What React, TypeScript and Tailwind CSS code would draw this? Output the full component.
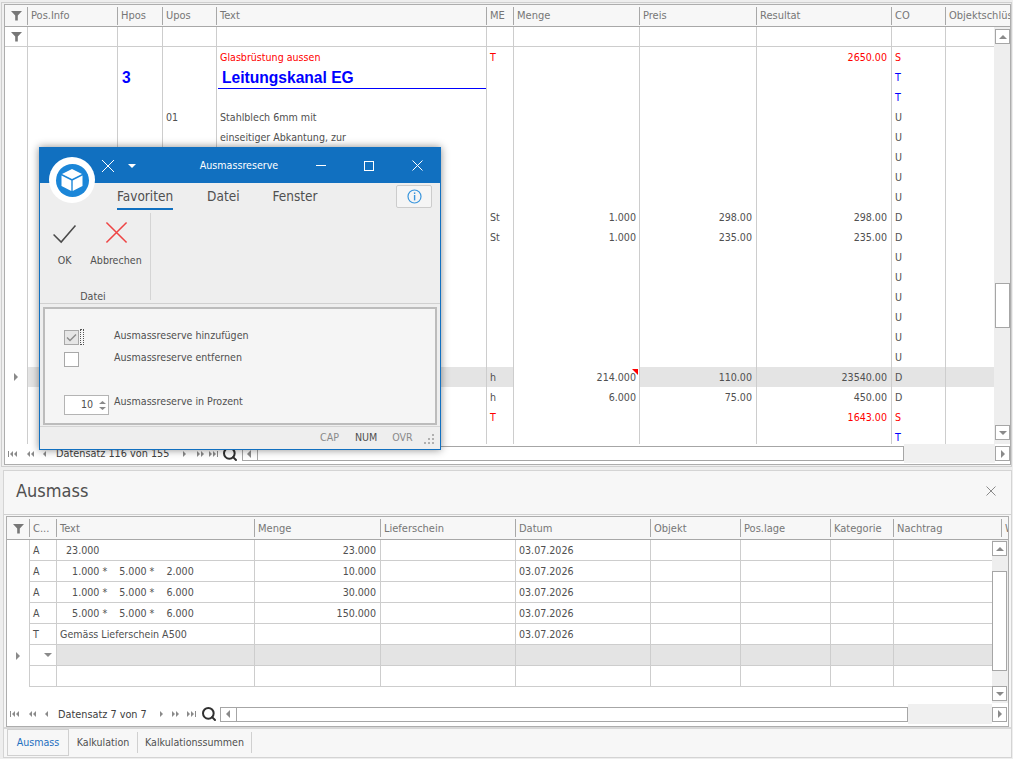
import { Search } from 'lucide-react'

const topHeadWidths = [22, 90, 45, 54, 270, 27, 126, 117, 135, 54, 65]
const topCols = [23, 90, 45, 54, 270, 27, 126, 117, 135, 54, 48]
const topHeads = ['', 'Pos.Info', 'Hpos', 'Upos', 'Text', 'ME', 'Menge', 'Preis', 'Resultat', 'CO', 'Objektschlüs']

const lowHeadWidths = [22, 27, 198, 126, 135, 135, 90, 90, 63, 108]
const lowHeads = ['', 'C...', 'Text', 'Menge', 'Lieferschein', 'Datum', 'Objekt', 'Pos.lage', 'Kategorie', 'Nachtrag']

type TopRow = { upos?: string; text?: string; me?: string; menge?: string; preis?: string; res?: string; co?: string; tone?: 'red' | 'blue' }

const topRows: TopRow[] = [
  { text: 'Glasbrüstung aussen', me: 'T', res: '2650.00', co: 'S', tone: 'red' },
  { co: 'T', tone: 'blue' },
  { co: 'T', tone: 'blue' },
  { upos: '01', text: 'Stahlblech 6mm mit', co: 'U' },
  { text: 'einseitiger Abkantung, zur', co: 'U' },
  { co: 'U' },
  { co: 'U' },
  { co: 'U' },
  { me: 'St', menge: '1.000', preis: '298.00', res: '298.00', co: 'D' },
  { me: 'St', menge: '1.000', preis: '235.00', res: '235.00', co: 'D' },
  { co: 'U' },
  { co: 'U' },
  { co: 'U' },
  { co: 'U' },
  { co: 'U' },
  { co: 'U' },
  { me: 'h', menge: '214.000', preis: '110.00', res: '23540.00', co: 'D' },
  { me: 'h', menge: '6.000', preis: '75.00', res: '450.00', co: 'D' },
  { me: 'T', res: '1643.00', co: 'S', tone: 'red' },
  { co: 'T', tone: 'blue' },
]

const lowRows = [
  { c: 'A', text: '  23.000', menge: '23.000', datum: '03.07.2026' },
  { c: 'A', text: '    1.000 *    5.000 *    2.000', menge: '10.000', datum: '03.07.2026' },
  { c: 'A', text: '    1.000 *    5.000 *    6.000', menge: '30.000', datum: '03.07.2026' },
  { c: 'A', text: '    5.000 *    5.000 *    6.000', menge: '150.000', datum: '03.07.2026' },
  { c: 'T', text: 'Gemäss Lieferschein A500', menge: '', datum: '03.07.2026' },
]

function Funnel() {
  return (
    <svg width="11" height="11" viewBox="0 0 11 11">
      <path d="M0 1h11L6.8 5.6V10.5H4.2V5.6z" fill="#777" />
    </svg>
  )
}

function Tri({ dir, color = '#8a8a8a' }: { dir: 'l' | 'r' | 'u' | 'd'; color?: string }) {
  const d = { l: 'M6 1v8L2 5z', r: 'M3 1v8l4-4z', u: 'M1 7h8L5 3z', d: 'M1 3h8L5 7z' }[dir]
  return (
    <svg width="10" height="10" viewBox="0 0 10 10" className="shrink-0">
      <path d={d} fill={color} />
    </svg>
  )
}

function NavGlyph({ dir, double, bar }: { dir: 'l' | 'r'; double?: boolean; bar?: boolean }) {
  const left = dir === 'l'
  return (
    <svg width="10" height="8" viewBox="0 0 10 8" className="shrink-0">
      {left ? (
        <g fill="#8a8a8a">
          {bar && <rect x="0" y="1" width="1" height="6" />}
          <path d="M5 1v6L2 4z" />
          {(double || bar) && <path d="M9 1v6L6 4z" />}
        </g>
      ) : (
        <g fill="#8a8a8a">
          <path d={double || bar ? 'M1 1v6l3-3z' : 'M4 1v6l3-3z'} />
          {(double || bar) && <path d="M5 1v6l3-3z" />}
          {bar && <rect x="9" y="1" width="1" height="6" />}
        </g>
      )}
    </svg>
  )
}

function ScrollBtn({ dir }: { dir: 'l' | 'r' | 'u' | 'd' }) {
  return (
    <div className="flex h-[15px] w-[15px] shrink-0 items-center justify-center border border-[#a6a6a6] bg-white">
      <Tri dir={dir} />
    </div>
  )
}

function HeadCell({ w, label, first }: { w: number; label: string; first?: boolean }) {
  return (
    <div style={{ width: w }} className="flex h-full shrink-0 items-center overflow-hidden">
      {first ? (
        <div className="flex w-full justify-center">
          <Funnel />
        </div>
      ) : (
        <>
          <span className="mr-[3px] h-[18px] w-px shrink-0 bg-[#a8a8a8]" />
          <span className="translate-y-[1px] text-[11px] whitespace-nowrap text-[#767676]">{label}</span>
        </>
      )}
    </div>
  )
}

function TopGridRow({ row, index }: { row: TopRow; index: number }) {
  const selected = index === 16
  const bg = selected ? 'bg-[#e4e4e4]' : 'bg-white'
  const tone = row.tone === 'red' ? 'text-[#ff0000]' : row.tone === 'blue' ? 'text-[#0000ff]' : 'text-[#505050]'
  const cell = `h-full shrink-0 border-r border-[#cdcdcd] px-[3px] leading-[20px] whitespace-pre ${bg}`
  return (
    <div className="flex h-[20px]">
      <div className="flex w-[23px] shrink-0 items-center justify-center border-r border-[#cdcdcd] bg-white">
        {selected && <Tri dir="r" />}
      </div>
      <div className={`w-[90px] ${cell}`} />
      <div className={`w-[45px] ${cell}`}>
        {index === 1 ? <span className='inline-block translate-y-[1px] pl-[1px] font-["Liberation_Sans",sans-serif] text-[15.6px] font-bold text-[#0000ff]'>3</span> : ''}
      </div>
      <div className={`w-[54px] ${cell} text-[#505050]`}>{row.upos}</div>
      <div className={`relative w-[270px] ${cell} ${tone}`}>
        {index === 1 ? (
          <>
            <span className='inline-block translate-y-[1px] pl-[2px] font-["Liberation_Sans",sans-serif] text-[15.6px] font-bold text-[#0000ff]'>Leitungskanal EG</span>
            <span className="absolute top-[21px] left-[1px] z-10 h-px w-[268px] bg-[#0000ff]" />
          </>
        ) : (
          row.text
        )}
      </div>
      <div className={`w-[27px] ${cell} ${tone}`}>{row.me}</div>
      <div className={`relative w-[126px] ${cell} !bg-white text-right ${tone}`}>
        {row.menge}
        {selected && <span className="absolute top-[2px] right-[1px] h-0 w-0 border-t-[6px] border-l-[6px] border-t-[#ff0000] border-l-transparent" />}
      </div>
      <div className={`w-[117px] ${cell} pr-[4px] text-right ${tone}`}>{row.preis}</div>
      <div className={`w-[135px] ${cell} pr-[4px] text-right ${tone}`}>{row.res}</div>
      <div className={`w-[54px] ${cell} ${tone}`}>{row.co}</div>
      <div className={`w-[48px] shrink-0 ${bg}`} />
    </div>
  )
}

function TopGrid() {
  return (
    <div className="flex h-[461px] flex-col border border-[#adadad] bg-white">
      <div className="flex h-[22px] shrink-0 items-center border-b border-[#a8a8a8] bg-[#f7f7f7]">
        {topHeads.map((h, i) => (
          <HeadCell key={h + i} w={topHeadWidths[i]} label={h} first={i === 0} />
        ))}
      </div>
      <div className="flex h-[417px] shrink-0">
        <div className="flex min-w-0 flex-1 flex-col overflow-hidden">
          <div className="flex h-[20px] shrink-0 border-b border-[#cdcdcd]">
            {topCols.map((w, i) => (
              <div key={i} style={{ width: w }} className={`flex shrink-0 items-center justify-center ${i < 10 ? 'border-r border-[#cdcdcd]' : ''}`}>
                {i === 0 && <Funnel />}
              </div>
            ))}
          </div>
          <div className="h-[397px] overflow-hidden">
            {topRows.map((r, i) => (
              <TopGridRow key={i} row={r} index={i} />
            ))}
          </div>
        </div>
        <div className="flex h-[417px] w-[16px] shrink-0 flex-col items-end bg-[#eeeeee] pt-[2px]">
          <ScrollBtn dir="u" />
          <div className="mt-[239px] h-[45px] w-[15px] border border-[#a6a6a6] bg-white" />
          <div className="mt-[97px]">
            <ScrollBtn dir="d" />
          </div>
        </div>
      </div>
      <div className="flex h-[20px] shrink-0 items-center bg-white pb-[1px] pl-[3px] text-[#404040]">
        <NavGlyph dir="l" bar />
        <div className="w-[7px] shrink-0" />
        <NavGlyph dir="l" double />
        <div className="w-[6px] shrink-0" />
        <NavGlyph dir="l" />
        <span className="mr-[10px] ml-[5px] w-[113px] shrink-0 translate-y-[1px] text-[10.8px] whitespace-nowrap">Datensatz 116 von 155</span>
        <NavGlyph dir="r" />
        <div className="w-[7px] shrink-0" />
        <NavGlyph dir="r" double />
        <div className="w-[2px] shrink-0" />
        <NavGlyph dir="r" bar />
        <Search size={16} strokeWidth={3} className="mr-[4px] ml-[4px] shrink-0 text-[#303030]" />
        <div className="flex h-[15px] w-[662px] shrink-0 border border-[#a6a6a6] bg-white">
          <div className="flex w-[15px] items-center justify-center border-r border-[#a6a6a6]">
            <Tri dir="l" />
          </div>
        </div>
        <div className="h-full flex-1 bg-[#f0f0f0]" />
        <ScrollBtn dir="r" />
      </div>
    </div>
  )
}

function LowGrid() {
  const line = 'border-r border-b border-[#cdcdcd]'
  return (
    <div className="flex h-[211px] flex-col border border-[#adadad] bg-white">
      <div className="flex h-[23px] shrink-0 items-center overflow-hidden border-b border-[#a8a8a8] bg-[#f7f7f7]">
        {lowHeads.map((h, i) => (
          <HeadCell key={h + i} w={lowHeadWidths[i]} label={h} first={i === 0} />
        ))}
        <HeadCell w={9} label="W" />
      </div>
      <div className="flex">
        <div className="w-[985px] shrink-0">
          {[...lowRows, null, undefined].map((r, i) => {
            const selected = r === null
            const bg = selected ? 'bg-[#e4e4e4]' : 'bg-white'
            const cell = `h-[21px] shrink-0 px-[3px] leading-[20px] whitespace-pre text-[#505050] ${line}`
            return (
              <div key={i} className="flex">
                <div className="flex h-[21px] w-[23px] shrink-0 items-center justify-center border-r border-[#cdcdcd]">
                  {selected && <Tri dir="r" />}
                </div>
                <div className={`flex w-[27px] items-center ${selected ? 'justify-end' : ''} ${cell}`}>{selected ? <Tri dir="d" /> : r?.c}</div>
                <div className={`w-[198px] ${cell} ${bg}`}>{r?.text}</div>
                <div className={`w-[126px] pr-[4px] text-right ${cell} ${bg}`}>{r?.menge}</div>
                <div className={`w-[135px] ${cell} ${bg}`} />
                <div className={`w-[135px] ${cell} ${bg}`}>{r?.datum}</div>
                <div className={`w-[90px] ${cell} ${bg}`} />
                <div className={`w-[90px] ${cell} ${bg}`} />
                <div className={`w-[63px] ${cell} ${bg}`} />
                <div className={`h-[21px] flex-1 border-b border-[#cdcdcd] ${bg}`} />
              </div>
            )
          })}
        </div>
        <div className="flex h-[163px] w-[16px] shrink-0 flex-col bg-[#eeeeee] pt-[1px]">
          <ScrollBtn dir="u" />
          <div className="mt-[15px] h-[100px] w-[15px] border border-[#a6a6a6] bg-white" />
          <div className="mt-[15px]">
            <ScrollBtn dir="d" />
          </div>
        </div>
      </div>
      <div className="mt-auto flex h-[22px] shrink-0 items-center pb-[2px] pl-[3px] text-[#404040]">
        <NavGlyph dir="l" bar />
        <div className="w-[7px] shrink-0" />
        <NavGlyph dir="l" double />
        <div className="w-[6px] shrink-0" />
        <NavGlyph dir="l" />
        <span className="mr-[9px] ml-[5px] w-[89px] shrink-0 translate-y-[1px] text-[10.8px] whitespace-nowrap">Datensatz 7 von 7</span>
        <NavGlyph dir="r" />
        <div className="w-[5px] shrink-0" />
        <NavGlyph dir="r" double />
        <div className="w-[5px] shrink-0" />
        <NavGlyph dir="r" bar />
        <Search size={16} strokeWidth={3} className="mr-[3px] ml-[5px] shrink-0 text-[#303030]" />
        <div className="flex h-[15px] w-[688px] shrink-0 border border-[#a6a6a6] bg-white">
          <div className="flex w-[16px] items-center justify-center border-r border-[#a6a6a6]">
            <Tri dir="l" />
          </div>
        </div>
        <div className="h-full flex-1 bg-[#f0f0f0]" />
        <ScrollBtn dir="r" />
        <div className="w-px shrink-0" />
      </div>
    </div>
  )
}

function Dialog() {
  return (
    <div className="absolute top-[147px] left-[39px] flex h-[303px] w-[402px] flex-col border border-[#1170c0] bg-[#eeeeee] shadow-[0_0_8px_rgba(0,0,0,0.45)]">
      {/* title bar */}
      <div className="flex h-[35px] shrink-0 items-center bg-[#1170c0] text-white">
        <svg width="14" height="14" viewBox="0 0 14 14" className="ml-[61px]">
          <path d="M1 1l12 12M13 1L1 13" stroke="#fff" strokeWidth="1" />
        </svg>
        <svg width="8" height="4" viewBox="0 0 8 4" className="ml-[13px]">
          <path d="M0 0h8L4 4z" fill="#fff" />
        </svg>
        <span className="ml-[63px] w-[80px] text-center whitespace-nowrap">Ausmassreserve</span>
        <span className="ml-[37px] h-px w-[10px] bg-white" />
        <span className="ml-[38px] h-[10px] w-[10px] border border-white" />
        <svg width="11" height="11" viewBox="0 0 11 11" className="ml-[38px]">
          <path d="M0.5 0.5l10 10M10.5 0.5l-10 10" stroke="#fff" strokeWidth="1" />
        </svg>
      </div>
      {/* logo */}
      <div className="absolute top-[9px] left-[9px] flex h-[46px] w-[46px] items-center justify-center rounded-full bg-white">
        <div className="flex h-[33px] w-[33px] items-center justify-center rounded-full bg-[#1b86d8]">
          <svg width="24" height="24" viewBox="0 0 24 24">
            <path d="M12 1l10 5-10 5L2 6z" fill="#fff" />
            <path d="M1.5 7.5l9.8 5V23l-9.8-5z" fill="#fff" />
            <path d="M22.5 7.5l-9.8 5V23l9.8-5z" fill="#fff" />
          </svg>
        </div>
      </div>
      {/* ribbon tabs */}
      <div className="flex h-[27px] shrink-0 items-center pl-[77px] text-[13.5px] text-[#505050]">
        <span className="relative">
          Favoriten
          <span className="absolute right-0 -bottom-[3px] left-0 h-[2px] bg-[#1170c0]" />
        </span>
        <span className="ml-[34px]">Datei</span>
        <span className="ml-[33px]">Fenster</span>
        <div className="mr-[8px] ml-auto flex h-[23px] w-[36px] items-center justify-center rounded-[2px] border border-[#cccccc] bg-[#f5f5f5]">
          <svg width="15" height="15" viewBox="0 0 15 15" fill="none">
            <circle cx="7.5" cy="7.5" r="6.5" stroke="#3a96dd" strokeWidth="1.2" />
            <rect x="6.9" y="3.4" width="1.4" height="1.6" fill="#3a96dd" />
            <rect x="6.9" y="6" width="1.4" height="5.4" fill="#3a96dd" />
          </svg>
        </div>
      </div>
      {/* ribbon body */}
      <div className="flex h-[94px] shrink-0 border-b border-[#d0d0d0] pt-[3px] text-[#505050]">
        <div className="mb-[3px] flex w-[111px] flex-col items-center border-r border-[#d4d4d4]">
          <div className="flex h-[62px] w-full">
            <div className="flex w-[49px] flex-col items-center">
              <svg width="25" height="20" viewBox="0 0 26 21" className="mt-[11px]" fill="none">
                <path d="M1.5 11l8 8L24.5 1.5" stroke="#4a4a4a" strokeWidth="1.6" />
              </svg>
              <span className="mt-[9px]">OK</span>
            </div>
            <div className="flex w-[54px] flex-col items-center">
              <svg width="23" height="23" viewBox="0 0 24 24" className="mt-[8px]" fill="none">
                <path d="M1.5 1.5l21 21M22.5 1.5l-21 21" stroke="#ee4444" strokeWidth="1.6" />
              </svg>
              <span className="mt-[9px]">Abbrechen</span>
            </div>
          </div>
          <span className="mt-[20px] pr-[4px]">Datei</span>
        </div>
      </div>
      {/* form */}
      <div className="mx-[3px] mt-[3px] flex h-[118px] shrink-0 flex-col border-2 border-[#bcbcbc] bg-[#f5f5f5] pt-[20px] pl-[19px] text-[#505050]">
        <div className="flex h-[16px] items-center">
          <span className="flex h-[15px] w-[15px] items-center justify-center border border-[#a8a8a8] bg-[#e6e6e6]">
            <svg width="11" height="9" viewBox="0 0 11 9" fill="none">
              <path d="M1 4.5l3 3 6-6" stroke="#8c8c8c" strokeWidth="1.4" />
            </svg>
          </span>
          <span className="ml-[1px] h-[16px] w-[4px] border border-dotted border-[#555555]" />
          <span className="ml-[30px] -translate-y-[1px]">Ausmassreserve hinzufügen</span>
        </div>
        <div className="mt-[6px] flex h-[16px] items-center">
          <span className="h-[15px] w-[15px] border border-[#a8a8a8] bg-white" />
          <span className="ml-[35px] -translate-y-[1px]">Ausmassreserve entfernen</span>
        </div>
        <div className="mt-[28px] flex h-[20px] items-center">
          <div className="flex h-[20px] w-[45px] items-center justify-end border border-[#b4b4b4] bg-white pr-[1px]">
            <span className="mr-[5px]">10</span>
            <span className="flex flex-col">
              <svg width="9" height="5" viewBox="0 0 9 5"><path d="M1 4h7L4.5 1z" fill="#8a8a8a" /></svg>
              <svg width="9" height="5" viewBox="0 0 9 5" className="mt-[1px]"><path d="M1 1h7L4.5 4z" fill="#8a8a8a" /></svg>
            </span>
          </div>
          <span className="ml-[5px] -translate-y-[3px]">Ausmassreserve in Prozent</span>
        </div>
      </div>
      {/* status bar */}
      <div className="mt-[1px] flex flex-1 items-center border-t border-[#d4d4d4] text-[#8a8a8a]">
        <span className="ml-[280px]">CAP</span>
        <span className="ml-[16px] text-[#505050]">NUM</span>
        <span className="ml-[15px]">OVR</span>
        <svg width="11" height="11" viewBox="0 0 11 11" className="ml-[11px]">
          <g fill="#b0b0b0">
            <rect x="8" y="1" width="2" height="2" />
            <rect x="4" y="5" width="2" height="2" />
            <rect x="8" y="5" width="2" height="2" />
            <rect x="0" y="9" width="2" height="2" />
            <rect x="4" y="9" width="2" height="2" />
            <rect x="8" y="9" width="2" height="2" />
          </g>
        </svg>
      </div>
    </div>
  )
}

export default function App() {
  return (
    <div className="relative h-[759px] w-[1013px] overflow-hidden bg-[#eeeeee] font-['DejaVu_Sans_Condensed','DejaVu_Sans',sans-serif] text-[10.6px]">
      {/* ── upper grid ─────────────────────────── */}
      <div className="mt-[2px] ml-[1px] w-[1011px] border border-[#cfcfcf] bg-[#f0f0f0] py-[1px] pl-[2px]">
        <TopGrid />
      </div>

      {/* ── Ausmass panel ──────────────────────── */}
      <div className="mt-[3px] ml-[3px] w-[1009px] border border-[#d4d4d4] bg-[#f7f7f7]">
        <div className="flex h-[44px] items-center justify-between border-b border-[#d0d0d0] pr-[15px] pb-[4px] pl-[12px]">
          <span className="text-[18px] text-[#505050]">Ausmass</span>
          <svg width="10" height="10" viewBox="0 0 10 10">
            <path d="M0.5 0.5l9 9M9.5 0.5l-9 9" stroke="#8a8a8a" strokeWidth="1" />
          </svg>
        </div>
        <div className="ml-[2px] w-[1003px] pt-[1px]">
          <LowGrid />
        </div>
        <div className="flex h-[30px] items-end border-t-2 border-[#d8d8d8] pb-[1px] pl-[3px] text-[#505050]">
          <div className="flex h-[27px] w-[62px] items-center justify-center border border-[#d0d0d0] bg-[#f7f7f7] pt-[1px] text-[#1f6fc0]">Ausmass</div>
          <div className="flex h-[21px] w-[69px] items-center justify-center self-center border-r border-[#d0d0d0] pt-[1px]">Kalkulation</div>
          <div className="flex h-[21px] w-[114px] items-center justify-center self-center border-r border-[#d0d0d0] pt-[1px]">Kalkulationssummen</div>
        </div>
      </div>

      <Dialog />
    </div>
  )
}
